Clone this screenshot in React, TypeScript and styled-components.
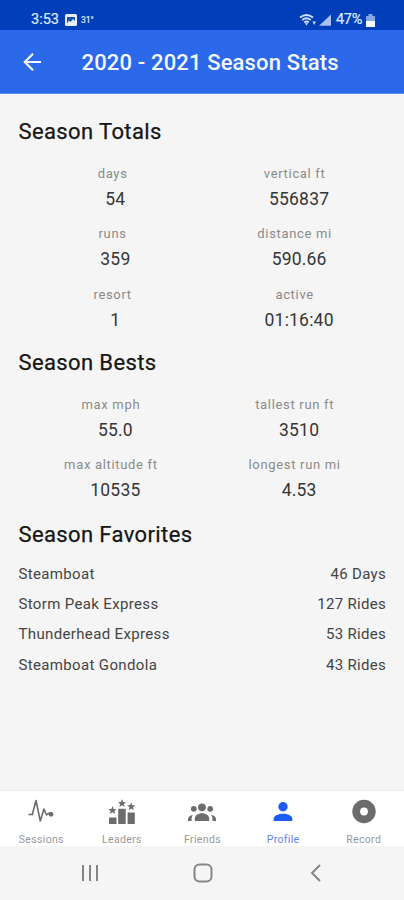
import React from "react";
import styled, { createGlobalStyle } from "styled-components";

const Global = createGlobalStyle`
  * { box-sizing: border-box; }
  body { margin: 0; background: #f5f5f5; font-family: Roboto, "Liberation Sans", sans-serif; }
`;

const Screen = styled.div`
  width: 404px;
  height: 900px;
  display: flex;
  flex-direction: column;
  background: #f5f5f5;
  overflow: hidden;
`;

const StatusBar = styled.div`
  height: 30px;
  flex: none;
  display: flex;
  align-items: center;
  justify-content: space-between;
  padding: 10px 29px 0 31px;
  background: #003fb9;
  color: #dfe9ff;
`;

const StatusGroup = styled.div<{ $gap: number }>`
  display: flex;
  align-items: center;
  gap: ${(p) => p.$gap}px;
`;

const StatusText = styled.span<{ $size: number; $spacing?: number }>`
  font-size: ${(p) => p.$size}px;
  line-height: 18px;
  font-weight: 400;
  -webkit-text-stroke: 0.2px currentColor;
  letter-spacing: ${(p) => p.$spacing ?? 0}px;
`;

const AppBar = styled.header`
  height: 64px;
  flex: none;
  display: flex;
  align-items: center;
  padding-left: 23px;
  background: #2b68ea;
  border-bottom: 1px solid #5f8eee;
  color: #f4f8ff;
`;

const Title = styled.h1`
  margin: 2px 0 0 39.5px;
  font-size: 22px;
  line-height: 28px;
  font-weight: 500;
  letter-spacing: 0.15px;
`;

const Content = styled.main`
  flex: 1;
  padding: 23px 18px 0 18.5px;
`;

const SectionTitle = styled.h2`
  margin: 0;
  height: 30px;
  font-size: 22px;
  line-height: 30px;
  font-weight: 400;
  letter-spacing: 0.38px;
  color: #161616;
  -webkit-text-stroke: 0.25px #161616;
`;

const StatGrid = styled.div<{ $bottom: number; $shift: number }>`
  display: grid;
  grid-template-columns: 1fr 1fr;
  padding: 17px 0 ${(p) => p.$bottom}px;

  & > :nth-child(odd) > :first-child {
    padding-left: ${(p) => p.$shift}px;
  }
`;

const Stat = styled.div`
  height: 60.4px;
  display: flex;
  flex-direction: column;
  align-items: center;
`;

const StatLabel = styled.div`
  height: 19px;
  font-size: 13px;
  line-height: 19px;
  letter-spacing: 0.68px;
  padding-left: 1px;
  color: #8b8b8b;
`;

const StatValue = styled.div`
  margin-top: 4px;
  padding-left: 10px;
  font-size: 17.5px;
  line-height: 24px;
  letter-spacing: 0.2px;
  color: #363636;
`;

const Favorites = styled.div`
  padding-top: 8px;
`;

const FavoriteRow = styled.div`
  height: 30.4px;
  display: flex;
  align-items: center;
  justify-content: space-between;
  font-size: 15px;
  color: #444;
`;

const FavoriteName = styled.span`
  letter-spacing: 0.35px;
`;

const FavoriteCount = styled.span`
  letter-spacing: 0.3px;
`;

const TabBar = styled.nav`
  height: 56px;
  flex: none;
  display: grid;
  grid-template-columns: repeat(5, 1fr);
  padding-left: 1px;
  background: #fff;
  border-top: 1px solid #ebebeb;
`;

const Tab = styled.div<{ $active?: boolean }>`
  display: flex;
  flex-direction: column;
  align-items: center;
  padding-top: 7px;
  color: ${(p) => (p.$active ? "#1d5cf0" : "#6c6c6c")};
`;

const TabLabel = styled.span<{ $active?: boolean }>`
  margin-top: 7px;
  font-size: 10.5px;
  line-height: 14px;
  letter-spacing: 0.35px;
  color: ${(p) => (p.$active ? "#5d86f0" : "#989898")};
`;

const SystemNav = styled.div`
  height: 54px;
  flex: none;
  display: grid;
  grid-template-columns: 123px 1fr 123px;
  align-items: center;
  padding-left: 1px;
  background: #f5f5f5;
`;

const NavSlot = styled.div<{ $align: string }>`
  display: flex;
  justify-content: ${(p) => p.$align};
  padding: 0 25px;
`;

const totals = [
  ["days", "54"],
  ["vertical ft", "556837"],
  ["runs", "359"],
  ["distance mi", "590.66"],
  ["resort", "1"],
  ["active", "01:16:40"],
];

const bests = [
  ["max mph", "55.0"],
  ["tallest run ft", "3510"],
  ["max altitude ft", "10535"],
  ["longest run mi", "4.53"],
];

const favorites = [
  ["Steamboat", "46 Days"],
  ["Storm Peak Express", "127 Rides"],
  ["Thunderhead Express", "53 Rides"],
  ["Steamboat Gondola", "43 Rides"],
];

type StatsProps = { items: string[][]; bottom: number; shift: number };

const Stats = ({ items, bottom, shift }: StatsProps) => (
  <StatGrid $bottom={bottom} $shift={shift}>
    {items.map(([label, value]) => (
      <Stat key={label}>
        <StatLabel>{label}</StatLabel>
        <StatValue>{value}</StatValue>
      </Stat>
    ))}
  </StatGrid>
);

const star = "M0-4.2 1.1-1.3 4.1-1.2 1.8.7 2.6 3.7 0 2-2.6 3.7-1.8.7-4.1-1.2-1.1-1.3Z";

const SessionsIcon = () => (
  <svg width="28" height="28" viewBox="0 0 28 28" fill="none" stroke="currentColor">
    <path d="M2 16.5h3.3L9 2.5l4.3 20.5 3.6-12 2.7 6 2.2-1.8h3" strokeWidth="1.6" strokeLinejoin="round" strokeLinecap="round" />
    <circle cx="24" cy="16.3" r="2.4" fill="currentColor" stroke="none" />
  </svg>
);

const LeadersIcon = () => (
  <svg width="28" height="28" viewBox="0 0 28 28" fill="currentColor">
    <path d="M1 19.500h7.500v6.500H1zM10.200 10.800h7.500v15.200h-7.500zM19.600 14.500h7.200v11.500h-7.200z" />
    <path d={star} transform="translate(4.500 12.300)" />
    <path d={star} transform="translate(14 5.200)" />
    <path d={star} transform="translate(23.200 8.500)" />
  </svg>
);

const FriendsIcon = () => (
  <svg width="30" height="28" viewBox="0 0 30 28" fill="currentColor">
    <circle cx="15" cy="9.300" r="3.900" />
    <path d="M7.800 23v-2.200c0-3.200 3.200-5.500 7.200-5.500s7.200 2.300 7.200 5.500V23z" />
    <circle cx="6.800" cy="10.800" r="2.900" />
    <circle cx="23.200" cy="10.800" r="2.900" />
    <path d="M1 23v-1.600c0-2.300 1.700-4 4.900-4.400-.9 1.200-1.300 2.300-1.300 3.800V23zM29 23v-1.600c0-2.300-1.700-4-4.900-4.400.9 1.200 1.300 2.300 1.300 3.800V23z" />
  </svg>
);

const ProfileIcon = () => (
  <svg width="28" height="28" viewBox="0 0 28 28" fill="currentColor">
    <circle cx="14" cy="8.700" r="4.700" />
    <path d="M4.700 23v-2.200c0-3.300 5-5 9.300-5s9.300 1.700 9.300 5V23z" />
  </svg>
);

const RecordIcon = () => (
  <svg width="28" height="28" viewBox="0 0 28 28" fill="none" stroke="currentColor">
    <circle cx="14" cy="13.500" r="7.800" strokeWidth="7.800" />
  </svg>
);

const tabs = [
  { label: "Sessions", Icon: SessionsIcon },
  { label: "Leaders", Icon: LeadersIcon },
  { label: "Friends", Icon: FriendsIcon },
  { label: "Profile", Icon: ProfileIcon, active: true },
  { label: "Record", Icon: RecordIcon },
];

export default function App() {
  return (
    <Screen>
      <Global />
      <StatusBar>
        <StatusGroup $gap={6}>
          <StatusText $size={14.5}>3:53</StatusText>
          <StatusGroup $gap={4}>
            <svg width="12" height="12" viewBox="0 0 12 12">
              <rect width="12" height="12" rx="1.5" fill="#e6eeff" />
              <path d="M2 9.500V3h8v4L8 5 5.500 8 4 6.500z" fill="#174fbd" />
            </svg>
            <StatusText $size={8.5}>31°</StatusText>
          </StatusGroup>
        </StatusGroup>
        <StatusGroup $gap={4}>
          <svg width="33" height="14" viewBox="0 0 33 14" fill="none">
            <path d="M1 4.500Q7.500-.5 14 4.500M3.300 7Q7.500 3.500 11.700 7M5.300 9.500Q7.500 7.500 9.700 9.500" stroke="#cfdfff" strokeWidth="1.900" />
            <path d="M5.800 10.300h3.400L7.500 12.500zM13.500 8.500h3.400l-1.700 3.500z" fill="#cfdfff" />
            <path d="M20 12.800 32 1.500v11.300z" fill="#a9c2f2" />
          </svg>
          <StatusText $size={14.5} $spacing={-0.3}>47%</StatusText>
          <svg width="9" height="13" viewBox="0 0 9 13">
            <path d="M2.500 0h4v2H9v11H0V2h2.500z" fill="#86a5e3" />
            <path d="M0 7h9v6H0z" fill="#f5f8ff" />
          </svg>
        </StatusGroup>
      </StatusBar>
      <AppBar>
        <svg width="19" height="20" viewBox="0 0 19 20" fill="none" stroke="currentColor" strokeWidth="2.2">
          <path d="M18 10H2M10 1.800 1.800 10l8.200 8.200" />
        </svg>
        <Title>2020 - 2021 Season Stats</Title>
      </AppBar>
      <Content>
        <SectionTitle>Season Totals</SectionTitle>
        <Stats items={totals} bottom={2.5} shift={4.5} />
        <SectionTitle>Season Bests</SectionTitle>
        <Stats items={bests} bottom={5} shift={1} />
        <SectionTitle>Season Favorites</SectionTitle>
        <Favorites>
          {favorites.map(([name, count]) => (
            <FavoriteRow key={name}>
              <FavoriteName>{name}</FavoriteName>
              <FavoriteCount>{count}</FavoriteCount>
            </FavoriteRow>
          ))}
        </Favorites>
      </Content>
      <TabBar>
        {tabs.map(({ label, Icon, active }) => (
          <Tab key={label} $active={active}>
            <Icon />
            <TabLabel $active={active}>{label}</TabLabel>
          </Tab>
        ))}
      </TabBar>
      <SystemNav>
        <NavSlot $align="flex-end">
          <svg width="18" height="18" viewBox="0 0 18 18" stroke="#858585" strokeWidth="2">
            <path d="M2 1v16M9 1v16M16 1v16" />
          </svg>
        </NavSlot>
        <NavSlot $align="center">
          <svg width="20" height="20" viewBox="0 0 20 20" fill="none" stroke="#858585" strokeWidth="2">
            <rect x="1.500" y="1.500" width="17" height="17" rx="5" />
          </svg>
        </NavSlot>
        <NavSlot $align="flex-start">
          <svg width="18" height="18" viewBox="0 0 18 18" fill="none" stroke="#858585" strokeWidth="2">
            <path d="M14 1 6 9l8 8" />
          </svg>
        </NavSlot>
      </SystemNav>
    </Screen>
  );
}
